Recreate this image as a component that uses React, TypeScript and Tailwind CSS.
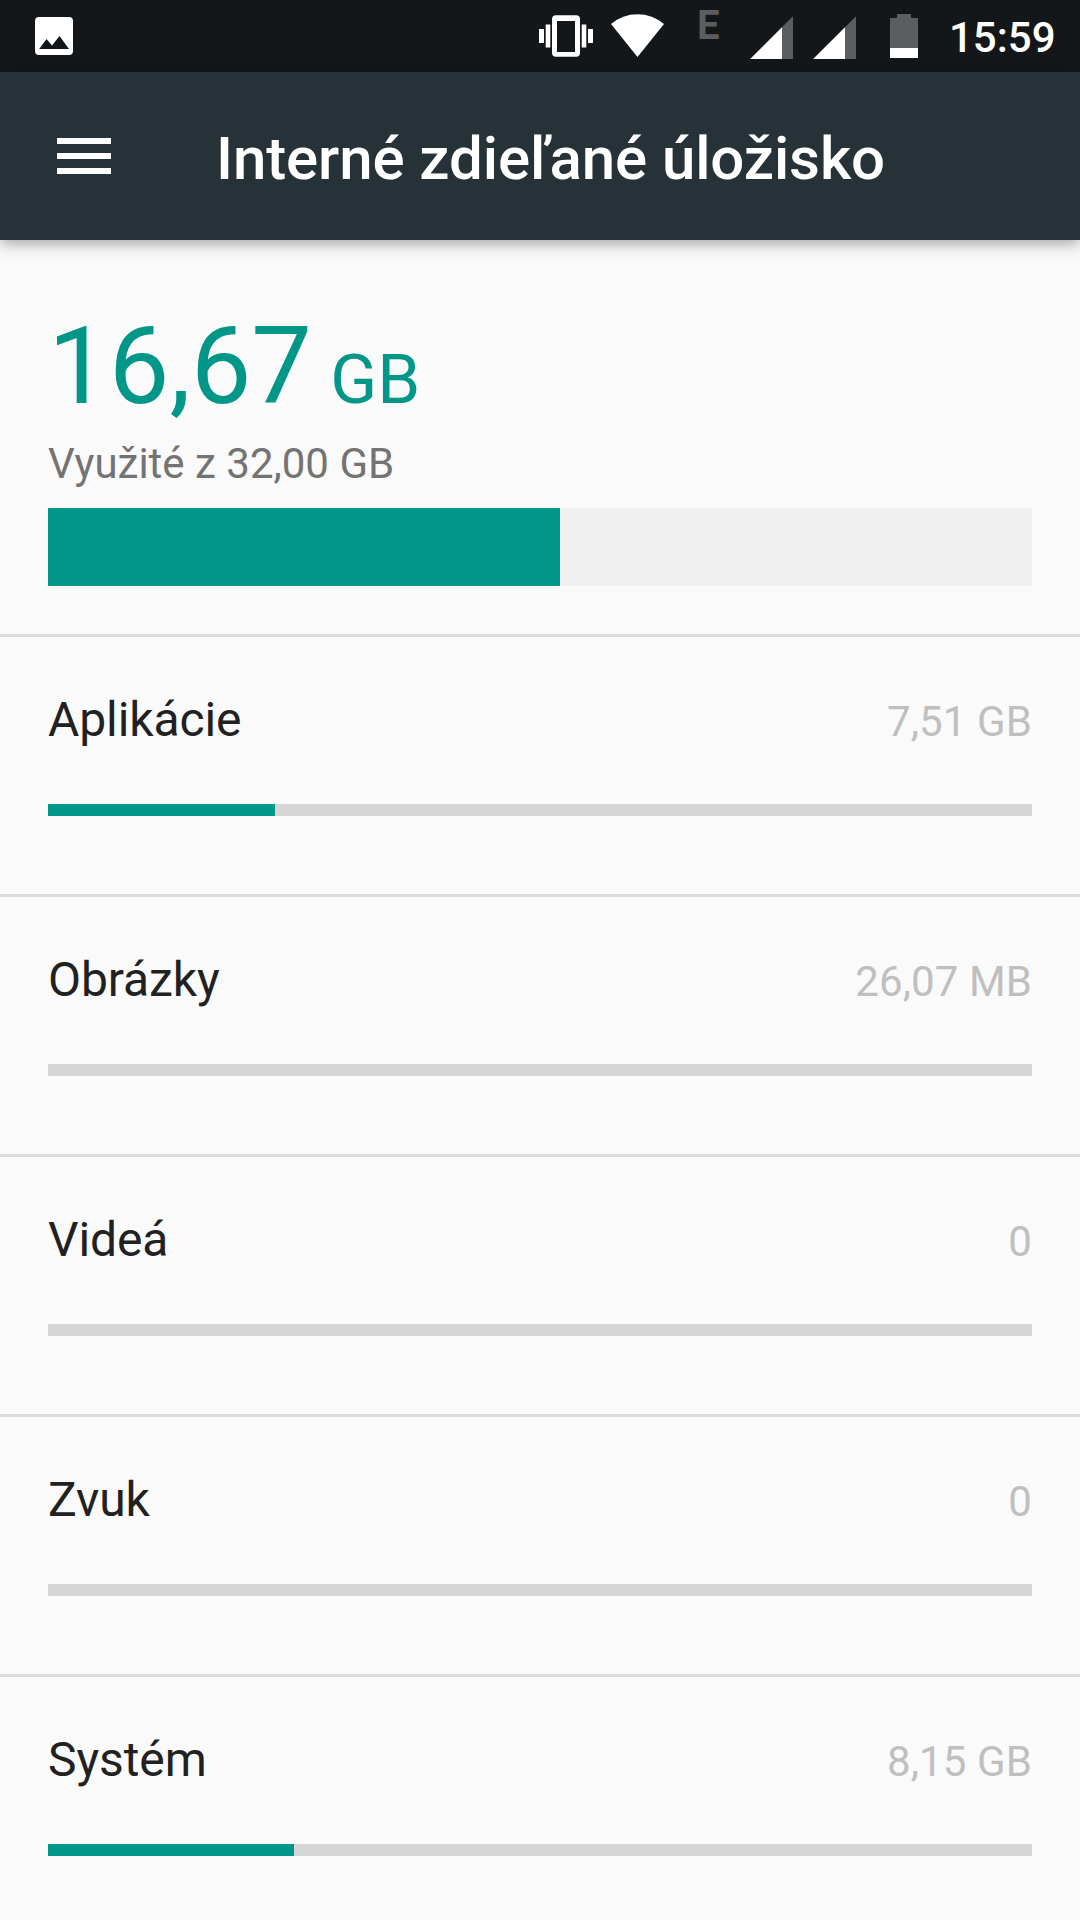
import React from 'react';

const rows = [
  { name: 'Aplikácie', size: '7,51 GB', used: 227 },
  { name: 'Obrázky', size: '26,07 MB', used: 0 },
  { name: 'Videá', size: '0', used: 0 },
  { name: 'Zvuk', size: '0', used: 0 },
  { name: 'Systém', size: '8,15 GB', used: 246 },
];

function SignalIcon({ className }: { className: string }) {
  return (
    <svg viewBox="0 0 44 72" className={className}>
      <path fill="#5c5d5f" d="M43 16.200V59H0.200z" />
      <path fill="#fff" d="M32 27.200V59H0.200z" />
    </svg>
  );
}

function StatusBar() {
  return (
    <div className="flex h-[72px] shrink-0 items-start bg-[#141719] pl-[35px] text-white">
      <svg viewBox="0 0 38 72" className="h-[72px] w-[38px] shrink-0">
        <path fill="#fff" fillRule="evenodd" d="M4 17h30q4 0 4 4v30q0 4-4 4H4q-4 0-4-4V21q0-4 4-4zM4.200 49H34L24.500 36 17 45.500 11.500 39z" />
      </svg>
      <svg viewBox="0 0 54 72" className="ml-[466px] h-[72px] w-[54px] shrink-0">
        <path fill="#fff" fillRule="evenodd" d="M17 15.300h20q4 0 4 4v33.400q0 4-4 4H17q-4 0-4-4V19.300q0-4 4-4zM18 21v31h18V21z" />
        <path fill="#fff" d="M0 29h5v14H0zM6.700 24.500h4.600v23H6.700zM42.700 24.500h4.600v23h-4.600zM49 29h5v14h-5z" />
      </svg>
      <svg viewBox="0 0 54 72" className="ml-[18px] h-[72px] w-[54px] shrink-0">
        <path fill="#fff" d="M0 24Q11.500 14.200 26.500 14.200T53 24L26.500 57z" />
      </svg>
      <span className="ml-[32px] w-[53px] shrink-0 text-[40px] leading-[52px] font-bold text-[#5c5d5f]">E</span>
      <SignalIcon className="h-[72px] w-[44px] shrink-0" />
      <SignalIcon className="ml-[19px] h-[72px] w-[44px] shrink-0" />
      <svg viewBox="0 0 28 72" className="ml-[33px] h-[72px] w-[28px] shrink-0">
        <path fill="#5c5d5f" d="M0 18h7v-4h14v4h7v30H0z" />
        <path fill="#fff" d="M0 48h28v10H0z" />
      </svg>
      <span className="ml-[31px] text-[42px] leading-[76px] font-medium">15:59</span>
    </div>
  );
}

function AppBar() {
  return (
    <header className="z-10 flex h-[168px] shrink-0 items-start bg-[#263238] pl-[57px] text-white shadow-[0_4px_14px_rgba(0,0,0,0.34)]">
      <div className="mt-[66px] flex w-[54px] flex-col gap-[9px]">
        <div className="h-1.5 bg-white" />
        <div className="h-1.5 bg-white" />
        <div className="h-1.5 bg-white" />
      </div>
      <h1 className="ml-[105px] text-[60px] leading-[173px] font-medium whitespace-nowrap tracking-[-0.1px]">Interné zdieľané úložisko</h1>
    </header>
  );
}

export default function App() {
  return (
    <div className="flex h-[1920px] w-[1080px] flex-col overflow-hidden bg-[#fafafa] font-[Roboto,sans-serif]">
      <StatusBar />
      <AppBar />
      <section className="flex h-[397px] shrink-0 flex-col border-b-[3px] border-[#dcdcdc] px-12 pt-[60px]">
        <div className="flex h-[139px] items-baseline text-[#009688]">
          <span className="text-[108px] leading-[132px]">16,67</span>
          <span className="ml-px text-[69px] leading-[80px] whitespace-pre"> GB</span>
        </div>
        <div className="h-[69px] text-[42px] leading-[50px] text-[#737373]">Využité z 32,00 GB</div>
        <div className="h-[78px] bg-[#f0f0f0]">
          <div className="h-full w-[512px] bg-[#009688]" />
        </div>
      </section>
      {rows.map((r) => (
        <section key={r.name} className="flex h-[260px] shrink-0 flex-col border-b-[3px] border-[#dcdcdc] px-12 pt-[55px]">
          <div className="flex h-[112px] items-baseline justify-between">
            <span className="text-[48px] leading-[56px] tracking-[-0.1px] text-[#212121]">{r.name}</span>
            <span className="text-[42px] leading-[50px] tracking-[0.1px] text-[#bfbfbf]">{r.size}</span>
          </div>
          <div className="h-3 bg-[#d6d6d6]">
            <div className="h-full bg-[#009688]" style={{ width: r.used }} />
          </div>
        </section>
      ))}
    </div>
  );
}
